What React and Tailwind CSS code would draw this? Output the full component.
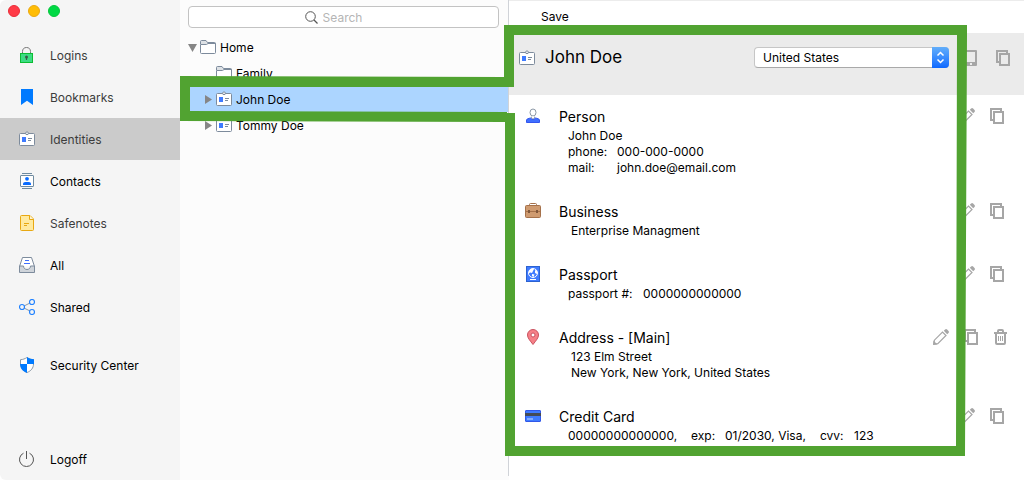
import React from 'react';
import clsx from 'clsx';

const LockIcon = () => (
  <svg width="16" height="16" viewBox="0 0 16 16" fill="none">
    <path d="M3.500 7V4.500C3.500 2 5 .5 7.500 .5S11.500 2 11.500 4.500V7" stroke="#777" />
    <rect x="1.500" y="6.500" width="12" height="9" fill="#3ddc84" stroke="#0cbd33" />
    <circle cx="7.500" cy="10" r="1.500" fill="#3c5a4a" />
    <path d="M7.500 10v3" stroke="#3c5a4a" strokeWidth="1.200" />
  </svg>
);

const BookmarkIcon = () => (
  <svg width="16" height="16" viewBox="0 0 16 16">
    <path d="M2 0h12v16l-6-4.200L2 16z" fill="#007aff" />
  </svg>
);

const IdentityIcon = () => (
  <svg width="16" height="16" viewBox="0 0 16 16" fill="none">
    <rect x=".5" y="2.500" width="15" height="12" rx="1" fill="#fff" stroke="#7d8b9c" />
    <path d="M6.500 2.500c0-1 .5-1.500 1.500-1.500s1.500.5 1.500 1.500L9 3.500H7z" fill="#e3e6ea" stroke="#7d8b9c" />
    <rect x="3" y="6" width="4" height="5" fill="#3f7bff" />
    <path d="M9 7.500h4M9 9.500h3" stroke="#7d8b9c" />
  </svg>
);

const ContactIcon = () => (
  <svg width="16" height="16" viewBox="0 0 16 16" fill="none">
    <path d="M3 .5h10M3 15.500h10" stroke="#6f8ba0" />
    <rect x="1.500" y="2.500" width="13" height="11" rx=".5" fill="#fff" stroke="#6f8ba0" />
    <circle cx="8" cy="5.800" r="1.900" fill="#0a6cff" />
    <path d="M4 12v-1.500C4 9 6 9 8 9s4 0 4 1.500V12z" fill="#0a6cff" />
  </svg>
);

const NoteIcon = () => (
  <svg width="16" height="16" viewBox="0 0 16 16" fill="none" stroke="#e8a812">
    <path d="M2.500.5H11L14.500 4v10.500a1 1 0 0 1-1 1h-11a1 1 0 0 1-1-1v-13a1 1 0 0 1 1-1z" fill="#ffeaa0" />
    <path d="M10.500.5v4h4" fill="#fff6d5" />
    <path d="M5 8.500h5M5 10.500h3" />
  </svg>
);

const TrayIcon = () => (
  <svg width="16" height="16" viewBox="0 0 16 16" fill="none">
    <path d="M.5 9.500 3.500.5h9l3 9" fill="#fff" stroke="#7d8b9c" />
    <path d="M.5 9v6.500h15V9H11.500c0 2-1.500 3.500-3.500 3.500S4.500 11 4.500 9z" fill="#cfd4da" stroke="#7d8b9c" />
    <path d="M6 3.500h4M5 6.500h6" stroke="#3f6fff" />
  </svg>
);

const ShareIcon = () => (
  <svg width="16" height="16" viewBox="0 0 16 16" fill="none">
    <path d="m5 7 6-3M5 9l6 3" stroke="#8b98a6" />
    <circle cx="3" cy="8" r="2.500" stroke="#2383ff" strokeWidth="1.200" />
    <circle cx="13" cy="3" r="2.500" stroke="#2383ff" strokeWidth="1.200" />
    <circle cx="13" cy="13" r="2.500" stroke="#2383ff" strokeWidth="1.200" />
  </svg>
);

const ShieldIcon = () => (
  <svg width="16" height="16" viewBox="0 0 16 16">
    <path d="M8 .5c2 1.300 4 2 6.500 2.200V7c0 4-2.500 7-6.500 8.500C4 14 1.500 11 1.500 7V2.700C4 2.500 6 1.800 8 .5z" fill="#fff" stroke="#8b98a6" />
    <path d="M8 0c2 1.500 4.500 2.200 7 2.300V7H8z" fill="#007aff" />
    <path d="M1 7h7v9C4 14.500 1.200 11.500 1 7z" fill="#007aff" />
  </svg>
);

const PowerIcon = () => (
  <svg width="16" height="16" viewBox="0 0 16 16" fill="none" stroke="#555">
    <path d="M4.500 2.200a7 7 0 1 0 6 0M7.500 0v8" />
  </svg>
);

const FolderIcon = () => (
  <svg width="16" height="16" viewBox="0 0 16 16" fill="none" stroke="#7d8b9c">
    <path d="M.5 5V2.500a1 1 0 0 1 1-1H6l1.500 2h7a1 1 0 0 1 1 1V5" fill="#dde1e5" />
    <path d="M.5 13.500v-8h6l1.500-1h7.500v9a1 1 0 0 1-1 1h-13a1 1 0 0 1-1-1z" fill="#fff" />
  </svg>
);

const PersonIcon = () => (
  <svg width="16" height="16" viewBox="0 0 16 16" fill="none">
    <path d="M1.500 14.500V12c0-1 2-1.500 4-2l2.500 1.800L10.500 10c2 .5 4 1 4 2v2.500z" fill="#3f6fff" stroke="#3355ee" />
    <ellipse cx="8" cy="4.500" rx="3" ry="3.500" fill="#fff" stroke="#8b98a6" />
    <path d="M6.500 8.500v1.500L8 11l1.500-1V8.500" fill="#fff" stroke="#8b98a6" strokeWidth=".8" />
  </svg>
);

const BriefcaseIcon = () => (
  <svg width="16" height="16" viewBox="0 0 16 16" fill="none" stroke="#a5714a">
    <path d="M4.500 3.500v-2a1 1 0 0 1 1-1h5a1 1 0 0 1 1 1v2" />
    <rect x=".5" y="2.500" width="15" height="12" rx="1" fill="#cf9b70" />
    <path d="M1 8.500h14" />
    <path d="M4 7v3M12 7v3" stroke="#80573a" strokeWidth="2" />
  </svg>
);

const PassportIcon = () => (
  <svg width="16" height="16" viewBox="0 0 16 16" fill="none">
    <rect x="1.500" y=".5" width="13" height="15" fill="#3f7bff" stroke="#2c62d0" />
    <circle cx="8" cy="7" r="4.500" fill="#3f7bff" stroke="#fff" />
    <path d="M4 5c1-2 3-3 5-2l-1 2-1 2-1.500-.5L4 7zM7 8l2.500.5L8.500 11 7 10zM10 4l2 1v3l-2-1z" fill="#fff" />
    <path d="M5 13.500h6" stroke="#fff" />
  </svg>
);

const PinIcon = () => (
  <svg width="16" height="16" viewBox="0 0 16 16" stroke="#c9525f">
    <path d="M8 15.500C5 11.500 2.500 9 2.500 6a5.500 5.500 0 0 1 11 0c0 3-2.500 5.500-5.500 9.500z" fill="#f58087" />
    <circle cx="8" cy="6" r="2" fill="#fff" />
  </svg>
);

const CardIcon = () => (
  <svg width="16" height="16" viewBox="0 0 16 16">
    <rect x=".5" y="2.500" width="15" height="11" rx=".5" fill="#3f7bff" stroke="#3158e8" />
    <path d="M0 5h16v3H0z" fill="#444b57" />
    <path d="M2 10h6v2H2z" fill="#83adff" />
  </svg>
);

const PencilIcon = () => (
  <svg width="16" height="16" viewBox="0 0 16 16" fill="none">
    <path d="m1 15 .4-3.800L9.500 3 13 6.500l-8.200 8.200z" stroke="#a6a6a6" strokeWidth="1.200" />
    <path d="M.4 11.500 4.500 15.600 0 16zM10.800 1.800l1.300-1.300a1.500 1.500 0 0 1 2 0l1.400 1.400a1.500 1.500 0 0 1 0 2l-1.300 1.300z" fill="#a6a6a6" />
  </svg>
);

const CopyIcon = () => (
  <svg width="16" height="16" viewBox="0 0 16 16" fill="none" stroke="#a6a6a6" strokeWidth="2">
    <path d="M4 12H2V1h10v2" />
    <path d="M5 4h9v11H5z" />
  </svg>
);

const TabletIcon = () => (
  <svg width="16" height="16" viewBox="0 0 16 16">
    <path d="M2 0h12a1 1 0 0 1 1 1v14a1 1 0 0 1-1 1H2a1 1 0 0 1-1-1V1a1 1 0 0 1 1-1zm1 2v10h10V2zm5 11v2h2v-2z" fill="#a6a6a6" fillRule="evenodd" />
  </svg>
);

const TrashIcon = () => (
  <svg width="16" height="16" viewBox="0 0 16 16" fill="none" stroke="#a6a6a6">
    <path d="M5 3V2a1 1 0 0 1 1-1h3a1 1 0 0 1 1 1v1" strokeWidth="2" />
    <path d="M1 4h13" strokeWidth="2" />
    <path d="M3 4v10a1 1 0 0 0 1 1h7a1 1 0 0 0 1-1V4" strokeWidth="2" />
    <path d="M5.500 7v5M7.500 7v5M9.500 7v5" />
  </svg>
);

const navItems = [
  { label: 'Logins', icon: LockIcon, muted: true },
  { label: 'Bookmarks', icon: BookmarkIcon, muted: true },
  { label: 'Identities', icon: IdentityIcon, muted: true, active: true },
  { label: 'Contacts', icon: ContactIcon },
  { label: 'Safenotes', icon: NoteIcon, muted: true },
  { label: 'All', icon: TrayIcon },
  { label: 'Shared', icon: ShareIcon },
];

const treeItems = [
  { label: 'Home', icon: FolderIcon, arrow: 'down' },
  { label: 'Family', icon: FolderIcon, child: true },
  { label: 'John Doe', icon: IdentityIcon, arrow: 'right', child: true, selected: true },
  { label: 'Tommy Doe', icon: IdentityIcon, arrow: 'right', child: true },
];

const NavButton = ({ item }) => {
  const Icon = item.icon;
  return (
    <button
      type="button"
      className={clsx(
        'flex h-[42px] w-full items-center gap-[15px] pl-[19px] text-left',
        item.active && 'bg-[#cbcbcb]',
        item.muted ? 'text-[#3c3c3c]' : 'text-black'
      )}
    >
      <Icon />
      <span className="pt-[2px]">{item.label}</span>
    </button>
  );
};

const Sidebar = () => (
  <nav className="flex w-[180px] shrink-0 flex-col rounded-l-md bg-[#f5f5f5] text-[12px]">
    <div className="flex h-[34px] gap-2 pt-[5px] pl-2">
      <button type="button" aria-label="Close" className="h-3 w-3 rounded-full border border-[#ea2c38] bg-[#ff3b47]" />
      <button type="button" aria-label="Minimize" className="h-3 w-3 rounded-full border border-[#eba80f] bg-[#ffbd05]" />
      <button type="button" aria-label="Zoom" className="h-3 w-3 rounded-full border border-[#05c63c] bg-[#00d944]" />
    </div>
    {navItems.map((item) => (
      <NavButton key={item.label} item={item} />
    ))}
    <div className="pt-4">
      <NavButton item={{ label: 'Security Center', icon: ShieldIcon }} />
    </div>
    <div className="mt-auto">
      <NavButton item={{ label: 'Logoff', icon: PowerIcon }} />
    </div>
  </nav>
);

const Arrow = ({ direction }) => (
  <svg width="9" height="9" viewBox="0 0 9 9" fill="#868686" className="shrink-0">
    {direction === 'down' && <path d="M0 1h9L4.500 9z" />}
    {direction === 'right' && <path d="M1 0v9l7-4.500z" />}
  </svg>
);

const TreePanel = () => (
  <section className="flex w-[329px] shrink-0 flex-col bg-[#fcfcfc] text-[12px]">
    <div className="flex grow flex-col border-r border-[#d0d3d8]">
      <label className="mt-[6px] mr-[9px] mb-[6px] ml-2 flex h-[22px] items-center justify-center gap-[5px] rounded-sm border border-[#c3c3c3] bg-white pr-5">
        <svg width="13" height="13" viewBox="0 0 13 13" fill="none" stroke="#555">
          <circle cx="5.500" cy="5.500" r="4.800" />
          <path d="m9 9 3.500 3.500" strokeWidth="1.300" />
        </svg>
        <input type="text" aria-label="Search" placeholder="Search" className="field-sizing-content pt-px outline-none placeholder:text-[#b5b5b5]" />
      </label>
      {treeItems.map((item) => {
        const Icon = item.icon;
        return (
          <button
            type="button"
            key={item.label}
            className={clsx(
              'flex h-[26px] w-full items-center text-left',
              item.child ? 'pl-6' : 'pl-2',
              item.selected && 'bg-[#acd5ff]'
            )}
          >
            <Arrow direction={item.arrow} />
            <span className="mr-1 ml-[3px]"><Icon /></span>
            <span className="pt-px">{item.label}</span>
          </button>
        );
      })}
    </div>
    <div className="h-1" />
  </section>
);

const IconButton = ({ label, icon: Icon }) => (
  <button type="button" aria-label={label}>
    <Icon />
  </button>
);

const Entry = ({ title, icon: Icon, removable, children }) => (
  <article className="flex pt-3 pb-[14px] pl-4">
    <div className="w-[34px] shrink-0 pt-px">
      <Icon />
    </div>
    <div className="min-w-0 grow">
      <h2 className="mb-[2px] text-[14px] leading-[19px]">{title}</h2>
      <div className="pl-[9px] text-[12px] leading-4">{children}</div>
    </div>
    <div className={clsx('flex items-start gap-[14px] pt-px', removable ? 'pr-[15px]' : 'pr-[19px]')}>
      <IconButton label={`Edit ${title}`} icon={PencilIcon} />
      <IconButton label={`Copy ${title}`} icon={CopyIcon} />
      {removable && <IconButton label={`Delete ${title}`} icon={TrashIcon} />}
    </div>
  </article>
);

const Details = () => (
  <main className="min-w-0 grow border-t border-[#ececec] bg-white">
    <div className="flex h-8 items-center pl-8 text-[12px]">
      <button type="button">Save</button>
    </div>
    <header className="flex h-[62px] items-start bg-[#ebebeb] pt-[14px] pl-[10px]">
      <div className="flex h-[22px] grow items-center gap-[10px]">
        <IdentityIcon />
        <h1 className="text-[17px]">John Doe</h1>
      </div>
      <div className="relative mr-[13px] w-[195px]">
        <select
          aria-label="Country"
          className="block h-[21px] w-full appearance-none rounded border border-[#c6c6c6] border-b-[#a9a9a9] bg-white pl-2 text-[12px]"
        >
          <option>United States</option>
        </select>
        <span className="pointer-events-none absolute top-0 right-0 flex h-[21px] w-[17px] items-center justify-center rounded-r bg-gradient-to-b from-[#62aefa] to-[#0d68ff]">
          <svg width="9" height="13" viewBox="0 0 9 13" fill="none" stroke="#fff" strokeWidth="1.500">
            <path d="m1.500 4.500 3-3 3 3M1.500 8.500l3 3 3-3" />
          </svg>
        </span>
      </div>
      <div className="flex gap-[17px] pt-[3px] pr-[13px]">
        <IconButton label="Send to device" icon={TabletIcon} />
        <IconButton label="Copy identity" icon={CopyIcon} />
      </div>
    </header>

    <Entry title="Person" icon={PersonIcon}>
      <p>John Doe</p>
      <dl className="grid grid-cols-[49px_1fr]">
        <dt>phone:</dt>
        <dd>000-000-0000</dd>
        <dt>mail:</dt>
        <dd>john.doe@email.com</dd>
      </dl>
    </Entry>
    <Entry title="Business" icon={BriefcaseIcon}>
      <p className="pl-[3px]">Enterprise Managment</p>
    </Entry>
    <Entry title="Passport" icon={PassportIcon}>
      <dl className="grid grid-cols-[75px_1fr]">
        <dt>passport #:</dt>
        <dd>0000000000000</dd>
      </dl>
    </Entry>
    <Entry title="Address - [Main]" icon={PinIcon} removable>
      <p className="pl-[3px]">123 Elm Street</p>
      <p className="pl-[3px]">New York, New York, United States</p>
    </Entry>
    <Entry title="Credit Card" icon={CardIcon}>
      <p className="grid grid-cols-[123px_34px_95px_34px_1fr]">
        <span>00000000000000,</span>
        <span>exp:</span>
        <span>01/2030, Visa,</span>
        <span>cvv:</span>
        <span>123</span>
      </p>
    </Entry>
  </main>
);

// Callout joining the selected tree row to its details
const Callout = () => (
  <svg width="1024" height="480" viewBox="0 0 1024 480" className="pointer-events-none absolute top-0 left-0" fill="#51a331">
    <path d="M504 25h463v10H514v52H190v24l317 1v1h8v333h441l1-411h10l-2 421H505V122l-325-1V76l324 1z" />
  </svg>
);

const App = () => (
  <div className="relative flex min-h-screen overflow-hidden bg-white font-['Inter',sans-serif] text-black">
    <Sidebar />
    <TreePanel />
    <Details />
    <Callout />
  </div>
);

export default App;
